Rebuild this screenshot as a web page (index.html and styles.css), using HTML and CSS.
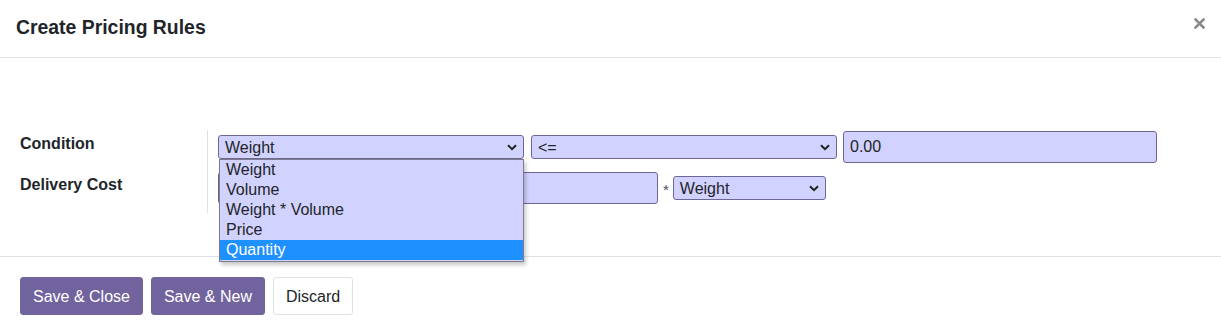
FILE: index.html
```html
<html lang="en">
<head>
  <title>Create Pricing Rules</title>
  <link rel="stylesheet" href="styles.css">
</head>
<body>
<div class="modal">
  <header class="modal-header">
    <h4 class="modal-title">Create Pricing Rules</h4>
    <button class="btn-close" aria-label="Close">
      <svg width="11" height="11" viewBox="0 0 11 11">
        <path d="M1.5 1.5 L9.5 9.5 M9.5 1.5 L1.5 9.5" stroke="#8a8a8a" stroke-width="2.6" stroke-linecap="square"/>
      </svg>
    </button>
  </header>

  <main class="modal-body">
    <div class="rule-grid">
      <div class="rule-label first">Condition</div>
      <div class="rule-field first">
        <div class="select-wrap">
          <div class="select w-variable">
            <span>Weight</span>
            <svg class="chevron" width="10" height="7" viewBox="0 0 10 7"><path d="M1 1.2 L5 5.2 L9 1.2" fill="none" stroke="#222" stroke-width="2"/></svg>
          </div>
          <ul class="options">
            <li>Weight</li>
            <li>Volume</li>
            <li>Weight * Volume</li>
            <li>Price</li>
            <li class="active">Quantity</li>
          </ul>
        </div>
        <div class="select w-operator">
          <span>&lt;=</span>
          <svg class="chevron" width="10" height="7" viewBox="0 0 10 7"><path d="M1 1.2 L5 5.2 L9 1.2" fill="none" stroke="#222" stroke-width="2"/></svg>
        </div>
        <div class="input w-max">0.00</div>
      </div>

      <div class="rule-label second">Delivery Cost</div>
      <div class="rule-field second">
        <div class="input w-cost"></div>
        <span class="times">*</span>
        <div class="select w-factor">
          <span>Weight</span>
          <svg class="chevron" width="10" height="7" viewBox="0 0 10 7"><path d="M1 1.2 L5 5.2 L9 1.2" fill="none" stroke="#222" stroke-width="2"/></svg>
        </div>
      </div>
    </div>
  </main>

  <footer class="modal-footer">
    <button class="btn btn-primary">Save &amp; Close</button>
    <button class="btn btn-primary">Save &amp; New</button>
    <button class="btn btn-secondary">Discard</button>
  </footer>
</div>
</body>
</html>
```

FILE: styles.css
```css
html {
    margin: 0;
    padding: 0;
}

body {
    margin: 0;
    font: 16px/1.5 "Liberation Sans", Arial, sans-serif;
    color: #212529;
    background: #fff;
}

.modal-header {
    display: flex;
    justify-content: space-between;
    align-items: flex-start;
    height: 58px;
    box-sizing: border-box;
    padding: 15px 16px 18px 16px;
    border-bottom: 1px solid #dee2e6;
}

.modal-title {
    margin: 0;
    font-size: 19.4px;
    line-height: 24px;
    font-weight: bold;
}

.btn-close {
    margin-top: 3px;
    padding: 0;
    border: 0;
    background: none;
    line-height: 0;
}

.modal-body {
    padding: 72px 20px 43px 20px;
}

.rule-grid {
    display: grid;
    grid-template-columns: 187px 1fr;
}

.rule-label {
    font-weight: bold;
    line-height: 20px;
}

.rule-label.first {
    padding-top: 4px;
}

.rule-label.second {
    padding-top: 8px;
}

.rule-field {
    display: flex;
    align-items: center;
    border-left: 1px solid #dee2e6;
    padding-left: 10px;
}

.rule-field.first {
    padding: 1px 0 4px 10px;
    height: 32px;
}

.rule-field.second {
    padding: 5px 0 9px 10px;
    height: 32px;
}

.select, .input {
    box-sizing: border-box;
    background: #d2d2ff;
    border: 1px solid #6e6699;
    border-radius: 3px;
    line-height: 20px;
    padding: 0 6px;
    color: #212529;
}

.select {
    display: flex;
    justify-content: space-between;
    align-items: center;
    height: 24px;
}

.select span {
    padding-top: 1px;
}

.input {
    height: 32px;
    display: flex;
    align-items: center;
}

.select-wrap {
    position: relative;
}

.w-variable {
    width: 306px;
}

.w-operator {
    width: 306px;
    margin-left: 7px;
}

.w-max {
    width: 314px;
    margin-left: 6px;
    margin-top: -1px;
}

.w-cost {
    width: 440px;
}

.times {
    margin: 0 4px 0 5px;
    font-size: 15px;
    line-height: 20px;
    color: #495057;
    align-self: center;
    padding-top: 3px;
}

.w-factor {
    width: 153px;
}

.options {
    position: absolute;
    top: 24px;
    left: 1px;
    width: 305px;
    box-sizing: border-box;
    margin: 0;
    padding: 0 0 1px 0;
    list-style: none;
    background: #d2d2ff;
    border: 1px solid #7c7c8c;
    box-shadow: 2px 3px 4px rgba(0, 0, 0, .22);
    z-index: 2;
}

.options li {
    line-height: 20px;
    padding: 0 6px;
}

.options li.active {
    background: #1e90ff;
    color: #fff;
}

.modal-footer {
    display: flex;
    gap: 8px;
    padding: 20px 20px;
    border-top: 1px solid #dee2e6;
}

.btn {
    font: 16px/24px "Liberation Sans", Arial, sans-serif;
    padding: 7px 12px 5px 12px;
    border-radius: 3px;
    border: 1px solid transparent;
}

.btn-primary {
    background: #71639e;
    border-color: #71639e;
    color: #fff;
}

.btn-secondary {
    background: #fff;
    border-color: #dee2e6;
    color: #212529;
}
```
